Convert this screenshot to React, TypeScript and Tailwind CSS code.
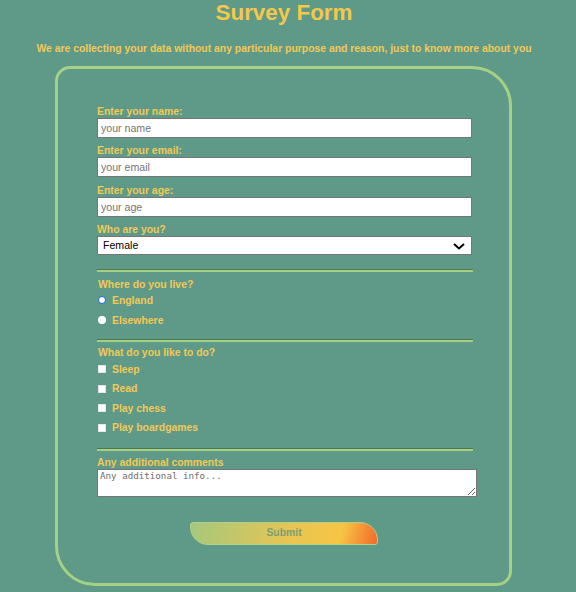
import React from "react";

const font = { fontFamily: '"Liberation Sans", Arial, sans-serif' };

function Hr({ className = "" }: { className?: string }) {
  return <div className={"w-[376px] border-t border-t-[#4d7a4e] border-b-2 border-b-[#a6d083] " + className} />;
}

function Label({ children, className = "" }: { children: React.ReactNode; className?: string }) {
  return <div className={"text-[10.4px] leading-[13px] font-bold text-[#f1c955] " + className}>{children}</div>;
}

function TextInput({ placeholder }: { placeholder: string }) {
  return (
    <input
      type="text"
      placeholder={placeholder}
      className="block w-[375px] h-[20px] bg-white border border-[#767676] px-[3px] text-[10.6px] text-black placeholder:text-[#757575] outline-none"
      style={font}
    />
  );
}

export default function App() {
  return (
    <div className="w-full min-h-[592px] bg-[#5f9a89]" style={font}>
      <div className="w-[568px]">
        <h1 className="text-[22.4px] leading-[26px] font-bold text-center text-[#f4c84a]">Survey Form</h1>
        <p className="mt-[16px] text-[10.4px] leading-[13px] font-bold text-center text-[#f1c955]">
          We are collecting your data without any particular purpose and reason, just to know more about you
        </p>
        <div className="mt-[11px] ml-[55px] w-[457px] h-[520px] border-[3px] border-[#a6d083] rounded-[15px_40px_15px_40px] pt-[36px] pl-[39px]">
          <Label>Enter your name:</Label>
          <TextInput placeholder="your name" />
          <Label className="mt-[6px]">Enter your email:</Label>
          <TextInput placeholder="your email" />
          <Label className="mt-[7px]">Enter your age:</Label>
          <TextInput placeholder="your age" />
          <Label className="mt-[6px]">Who are you?</Label>
          <div className="relative w-[375px] h-[19px] bg-white border border-[#767676]">
            <span className="absolute left-[5px] top-[2px] text-[10.6px] leading-[13px] text-black">Female</span>
            <svg className="absolute right-[6px] top-[6px]" width="12" height="7" viewBox="0 0 12 7">
              <path d="M1 1 L6 5.5 L11 1" fill="none" stroke="#000" strokeWidth="2" />
            </svg>
          </div>

          <Hr className="mt-[14px]" />
          <Label className="mt-[6px] pl-[1px]">Where do you live?</Label>
          <div className="mt-[-1px] h-[20px] flex items-center pl-[1px]">
            <span className="w-[8px] h-[8px] rounded-full border-[1.5px] border-[#1468e0] bg-white" />
            <span className="ml-[6px] text-[10.4px] leading-[13px] font-bold text-[#f1c955]">England</span>
          </div>
          <div className="h-[20px] flex items-center pl-[1px]">
            <span className="w-[8px] h-[8px] rounded-full bg-white" />
            <span className="ml-[6px] text-[10.4px] leading-[13px] font-bold text-[#f1c955]">Elsewhere</span>
          </div>

          <Hr className="mt-[9px]" />
          <Label className="mt-[4px] pl-[1px]">What do you like to do?</Label>
          <div className="mt-[0.5px]">
            {["Sleep", "Read", "Play chess", "Play boardgames"].map((t) => (
              <div key={t} className="h-[19.5px] flex items-center pl-[1px]">
                <span className="w-[8px] h-[8px] bg-white border border-[#e6e6e6]" />
                <span className="ml-[6px] text-[10.4px] leading-[13px] font-bold text-[#f1c955]">{t}</span>
              </div>
            ))}
          </div>

          <Hr className="mt-[10.5px]" />
          <Label className="mt-[4.5px]">Any additional comments</Label>
          <textarea
            placeholder="Any additional info..."
            className="block w-[380px] h-[28px] bg-white border border-[#767676] px-[2px] py-0 text-[9.2px] leading-[12px] text-black placeholder:text-[#6e6e6e] outline-none"
            style={{ fontFamily: '"DejaVu Sans Mono", monospace' }}
          />

          <button
            className="mt-[25px] ml-[93px] w-[188px] h-[23px] border border-[#b4cf86] rounded-[3px_18px_3px_18px] text-[10.4px] font-bold text-[#7f9d72] flex items-center justify-center"
            style={{ background: "linear-gradient(105deg, #a5c87d 0%, #e9c552 55%, #f6c544 80%, #f2692a 100%)" }}
          >
            Submit
          </button>
        </div>
      </div>
    </div>
  );
}
